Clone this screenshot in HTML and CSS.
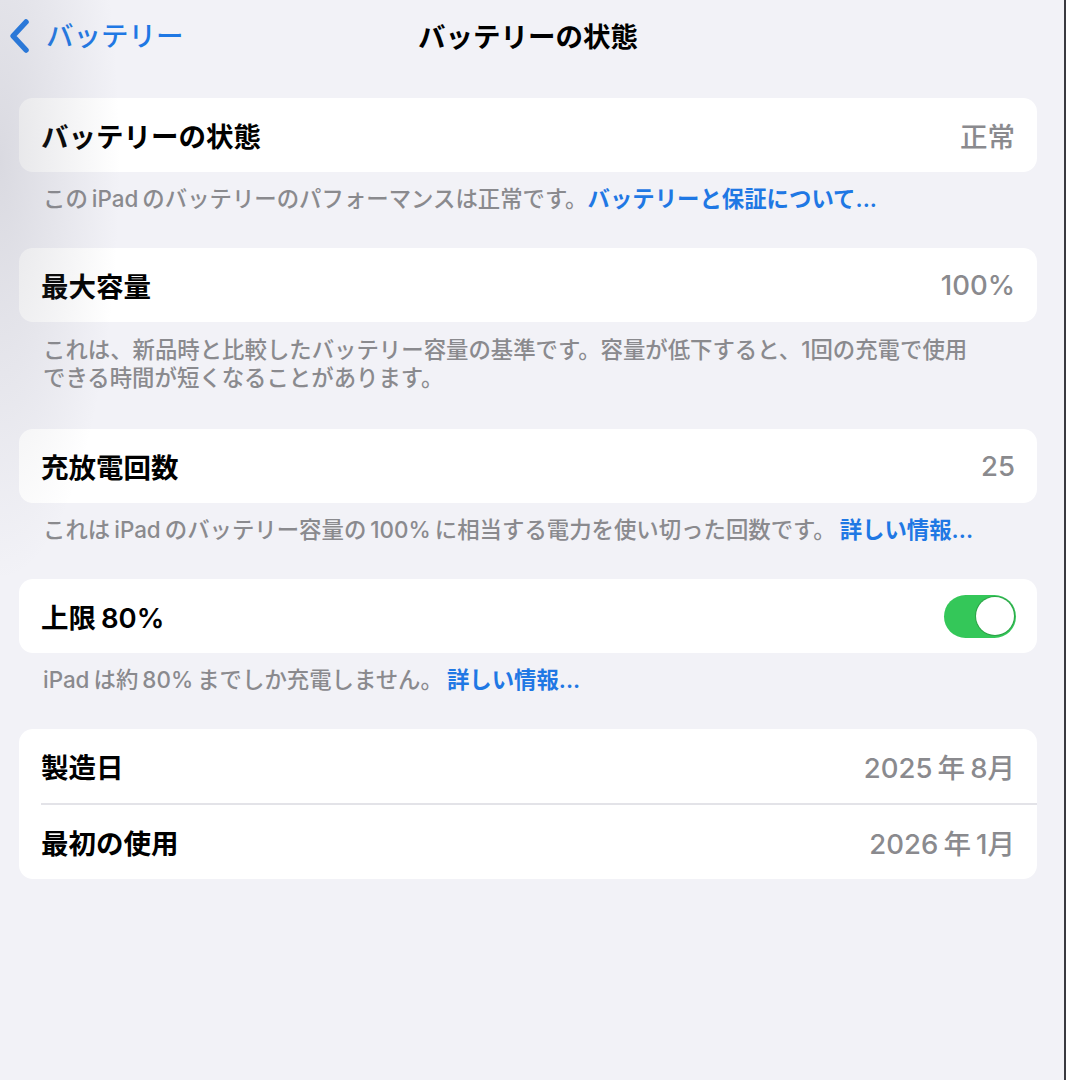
FILE: index.html
```html
<!DOCTYPE html>
<html lang="ja">
<head>
<meta charset="utf-8">
<link rel="stylesheet" href="styles.css">
</head>
<body>
<div class="screen">
  <div class="nav">
    <div class="back">
      <svg class="chev" width="24" height="36" viewBox="0 0 24 36"><path d="M18 4 L5 18 L18 32" fill="none" stroke="#1f78e4" stroke-width="5.5" stroke-linecap="round" stroke-linejoin="round"/></svg>
      <span class="back-text">バッテリー</span>
    </div>
    <div class="title">バッテリーの状態</div>
  </div>

  <div class="content">
    <div class="card">
      <div class="row"><span class="label">バッテリーの状態</span><span class="value">正常</span></div>
    </div>
    <div class="footer">この <span class="lat">iPad</span> のバッテリーのパフォーマンスは正常です。<span class="link">バッテリーと保証について...</span></div>

    <div class="card">
      <div class="row"><span class="label">最大容量</span><span class="value">100%</span></div>
    </div>
    <div class="footer two">これは、新品時と比較したバッテリー容量の基準です。容量が低下すると、1回の充電で使用<br>できる時間が短くなることがあります。</div>

    <div class="card">
      <div class="row"><span class="label">充放電回数</span><span class="value">25</span></div>
    </div>
    <div class="footer">これは <span class="lat">iPad</span> のバッテリー容量の <span class="lat">100%</span> に相当する電力を使い切った回数です。 <span class="link">詳しい情報...</span></div>

    <div class="card">
      <div class="row"><span class="label">上限 <span class="lat">80%</span></span><span class="toggle"><span class="knob"></span></span></div>
    </div>
    <div class="footer"><span class="lat">iPad</span> は約 <span class="lat">80%</span> までしか充電しません。 <span class="link">詳しい情報...</span></div>

    <div class="card">
      <div class="row"><span class="label">製造日</span><span class="value">2025 年 8月</span></div>
      <div class="divider"></div>
      <div class="row"><span class="label">最初の使用</span><span class="value">2026 年 1月</span></div>
    </div>
  </div>
  <div class="shade"></div>
</div>
</body>
</html>
```

FILE: styles.css
```css
html, body {
  margin: 0;
  padding: 0;
  background: #f2f2f7;
}
body {
  font-family: "Inter", "Noto Sans CJK JP", "Noto Sans", sans-serif;
  color: #000;
  word-spacing: -0.12em;
}
.screen {
  position: relative;
  width: 1064px;
  height: 1080px;
  border-right: 2px solid #3a3a40;
  background: #f2f2f7;
  overflow: hidden;
}
.nav {
  position: relative;
  height: 98px;
  display: flex;
  justify-content: center;
}
.back {
  position: absolute;
  left: 8px;
  top: 18px;
  display: flex;
  align-items: center;
  gap: 14px;
}
.chev {
  display: block;
}
.back-text {
  color: #1f78e4;
  font-size: 27.5px;
  font-weight: 500;
  line-height: 36px;
}
.title {
  margin-top: 18px;
  margin-left: -8px;
  font-size: 27.5px;
  font-weight: 700;
  line-height: 38px;
  height: 38px;
}
.content {
  padding: 0 27px 0 19px;
}
.card {
  background: #fff;
  border-radius: 14px;
  overflow: hidden;
}
.row {
  height: 74px;
  display: flex;
  align-items: center;
  justify-content: space-between;
  padding: 0 22px 0 22px;
}
.label {
  font-size: 27.5px;
  font-weight: 600;
}
.value {
  font-size: 27.5px;
  font-weight: 500;
  color: #8a8a8e;
  word-spacing: -0.08em;
}
.divider {
  height: 2px;
  background: #e3e3e8;
  margin-left: 22px;
}
.footer {
  padding: 13px 0 35px 24px;
  font-size: 22.4px;
  font-weight: 500;
  line-height: 28px;
  color: #8a8a8e;
}
.footer.two {
  padding-top: 14px;
  padding-bottom: 37px;
}
.link {
  color: #1f78e4;
  font-weight: 600;
}
.toggle {
  width: 72px;
  height: 43px;
  border-radius: 22px;
  background: #34c759;
  display: flex;
  align-items: center;
  justify-content: flex-end;
  padding-right: 2px;
  box-sizing: border-box;
  margin-right: -1px;
}
.knob {
  width: 38px;
  height: 38px;
  border-radius: 50%;
  background: #fff;
  box-shadow: 0 0 0 1px rgba(40,140,60,0.6);
}
.shade {
  position: absolute;
  left: 0;
  top: 0;
  width: 120px;
  height: 600px;
  background: radial-gradient(ellipse 120px 420px at 0 160px, rgba(120,120,135,0.2), rgba(120,120,135,0) 100%);
  pointer-events: none;
}
```
